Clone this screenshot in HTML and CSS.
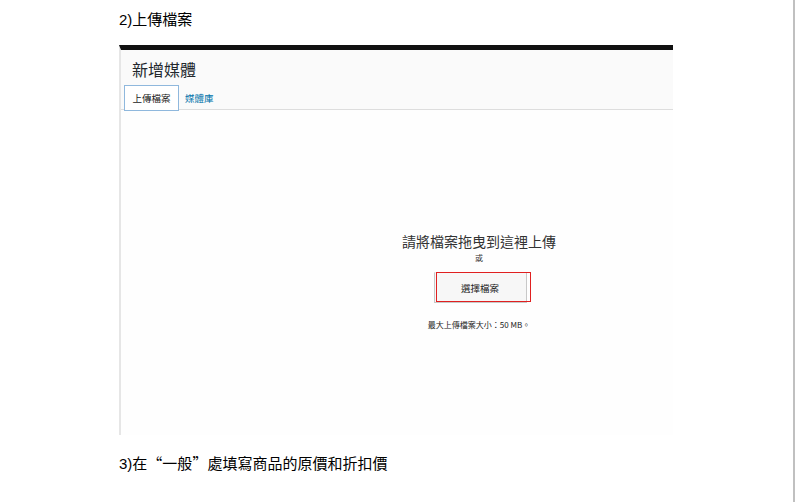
FILE: index.html
```html
<!DOCTYPE html>
<html lang="zh-Hant">
<head>
  <meta charset="UTF-8" />
  <meta name="viewport" content="width=device-width, initial-scale=1.0" />
  <title>上傳檔案</title>
  <link rel="stylesheet" href="styles.css">
</head>
<body>
  <div class="sheet">
    <p class="step">2)上傳檔案</p>

    <div class="shot">
      <div class="shot-head">
        <h1>新增媒體</h1>
        <div class="tabs">
          <span class="tab active">上傳檔案</span>
          <span class="tab">媒體庫</span>
        </div>
      </div>
      <div class="drop">
        <div class="drop-title">請將檔案拖曳到這裡上傳</div>
        <div class="drop-or">或</div>
        <button class="pick">選擇檔案</button>
        <div class="drop-max">最大上傳檔案大小：50 MB。</div>
      </div>
    </div>

    <p class="step step-next">3)在<span class="cjk">“</span>一般<span class="cjk">”</span>處填寫商品的原價和折扣價</p>
  </div>
</body>
</html>
```

FILE: styles.css
```css
body {
  margin: 0;
  padding: 0;
  background: #fff;
  font-family: "Liberation Sans", "Noto Sans CJK TC", sans-serif;
  color: #000;
}
.sheet {
  width: 795px;
  height: 502px;
  box-sizing: border-box;
  border-right: 2px solid #c0c0c0;
  padding-left: 119px;
  overflow: hidden;
}
.step {
  margin: 0;
  padding-top: 9px;
  font-size: 15px;
  line-height: 22px;
}
.cjk {
  font-family: "Noto Sans CJK TC", sans-serif;
}
.shot {
  margin-top: 14px;
  width: 554px;
  height: 390px;
  box-sizing: border-box;
  border-top: 5px solid #111;
  border-left: 2px solid #e6e6e6;
  background: #fefefe;
}
.shot-head {
  height: 60px;
  box-sizing: border-box;
  background: #fafafa;
  border-bottom: 1px solid #dddddd;
  padding: 7px 0 0 3px;
}
.shot-head h1 {
  margin: 0 0 0 8px;
  font-size: 16px;
  font-weight: normal;
  line-height: 24px;
  color: #23282d;
  font-family: "Noto Sans CJK TC", sans-serif;
}
.tabs {
  display: flex;
  align-items: center;
  gap: 6px;
  margin-top: 4px;
}
.tab {
  font-size: 9.5px;
  color: #0073aa;
  font-family: "Noto Sans CJK TC", sans-serif;
}
.tab.active {
  width: 55px;
  height: 26px;
  box-sizing: border-box;
  border: 1px solid #8fb8dd;
  background: #fff;
  color: #222;
  display: flex;
  align-items: center;
  justify-content: center;
}
.drop {
  display: flex;
  flex-direction: column;
  align-items: center;
  padding-left: 164px;
  padding-top: 121px;
  font-family: "Noto Sans CJK TC", sans-serif;
  color: #333;
}
.drop-title {
  font-size: 14px;
  line-height: 20px;
  color: #333;
}
.drop-or {
  font-size: 8px;
  line-height: 10px;
  margin-top: 2px;
}
.pick {
  margin-top: 9px;
  width: 93px;
  height: 31px;
  background: #f7f7f7;
  border: 1px solid #c8c8c8;
  border-top-color: #ececec;
  font-size: 9.5px;
  color: #222;
  font-family: "Noto Sans CJK TC", sans-serif;
  padding: 0;
  position: relative;
  left: 1px;
}
/* red highlight box drawn over the button, a bit to the right */
.pick::after {
  content: "";
  position: absolute;
  top: -1px;
  left: 1px;
  width: 95px;
  height: 30px;
  border: 1.5px solid #e02020;
  box-sizing: border-box;
}
.drop-max {
  margin-top: 17px;
  font-size: 8px;
  line-height: 10px;
  color: #222;
}
.step-next {
  padding-top: 17px;
}
```
